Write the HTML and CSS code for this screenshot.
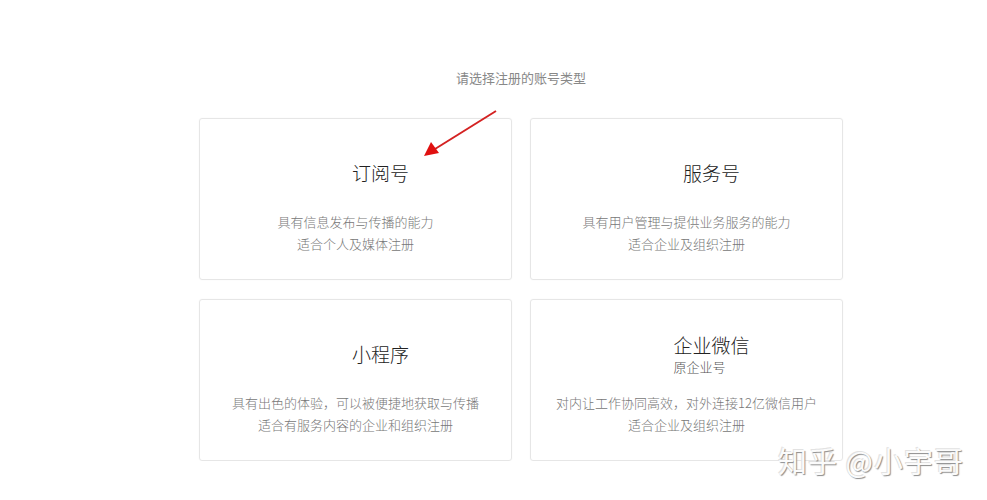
FILE: index.html
```html
<!doctype html>
<html lang="zh-CN">

<head>
    <meta charset="utf-8">
    <title>选择账号类型</title>
    <link rel="stylesheet" href="styles.css">
</head>

<body>
    <div class="reg-wrap">
        <p class="reg-tips">请选择注册的账号类型</p>
        <div class="reg-grid">
            <div class="reg-card">
                <div class="reg-head">
                    <h3 class="reg-title">订阅号</h3>
                </div>
                <p class="reg-desc">具有信息发布与传播的能力<br>适合个人及媒体注册</p>
            </div>
            <div class="reg-card">
                <div class="reg-head">
                    <h3 class="reg-title">服务号</h3>
                </div>
                <p class="reg-desc">具有用户管理与提供业务服务的能力<br>适合企业及组织注册</p>
            </div>
            <div class="reg-card">
                <div class="reg-head">
                    <h3 class="reg-title">小程序</h3>
                </div>
                <p class="reg-desc">具有出色的体验，可以被便捷地获取与传播<br>适合有服务内容的企业和组织注册</p>
            </div>
            <div class="reg-card">
                <div class="reg-head">
                    <div class="reg-name">
                        <h3 class="reg-title">企业微信</h3>
                        <span class="reg-sub">原企业号</span>
                    </div>
                </div>
                <p class="reg-desc">对内让工作协同高效，对外连接12亿微信用户<br>适合企业及组织注册</p>
            </div>
        </div>
        <!-- 红色标注箭头 -->
        <svg class="mark-arrow" width="90" height="60" viewBox="0 0 90 60">
            <line x1="85" y1="3" x2="24" y2="41" stroke="#d42222" stroke-width="2" />
            <polygon points="13,48 20,34 28,45" fill="#e01010" />
        </svg>
    </div>
    <div class="watermark">知乎 @小宇哥</div>
</body>

</html>
```

FILE: styles.css
```css
html,
body {
    margin: 0;
    background-color: #fff;
    font-family: "Microsoft YaHei", "Noto Sans CJK SC", sans-serif;
}

.reg-wrap {
    position: relative;
    width: 644px;
    margin-left: 199px;
    padding-top: 68px;
}

.reg-tips {
    margin: 0 0 30px;
    text-align: center;
    font-size: 13px;
    line-height: 20px;
    color: #888;
}

.reg-grid {
    display: grid;
    grid-template-columns: 313px 313px;
    gap: 19px 18px;
}

.reg-card {
    height: 162px;
    box-sizing: border-box;
    padding-top: 31px;
    border: 1px solid #e6e6e6;
    border-radius: 3px;
    box-shadow: 0 0 2px rgba(0, 0, 0, 0.04);
    text-align: center;
}

/* 标题区留出左侧图标位置 */
.reg-head {
    height: 46px;
    padding-left: 50px;
    display: flex;
    flex-direction: column;
    justify-content: center;
    align-items: center;
}

.reg-name {
    display: flex;
    flex-direction: column;
    align-items: flex-start;
}

.reg-title {
    margin: 0;
    font-size: 19px;
    font-weight: 300;
    line-height: 24px;
    color: #222;
}

.reg-sub {
    font-size: 13px;
    line-height: 19px;
    font-weight: 300;
    color: #555;
}

.reg-desc {
    margin: 15px 0 0;
    font-size: 13px;
    line-height: 22px;
    font-weight: 300;
    color: #777;
}

.mark-arrow {
    position: absolute;
    left: 212px;
    top: 108px;
}

.watermark {
    position: absolute;
    left: 778px;
    top: 440px;
    font-size: 29px;
    line-height: 40px;
    letter-spacing: 1px;
    color: #fbfbfb;
    text-shadow: 1px 1px 1px #8c8c8c, -1px -1px 0 #e2e2e2;
}
```
